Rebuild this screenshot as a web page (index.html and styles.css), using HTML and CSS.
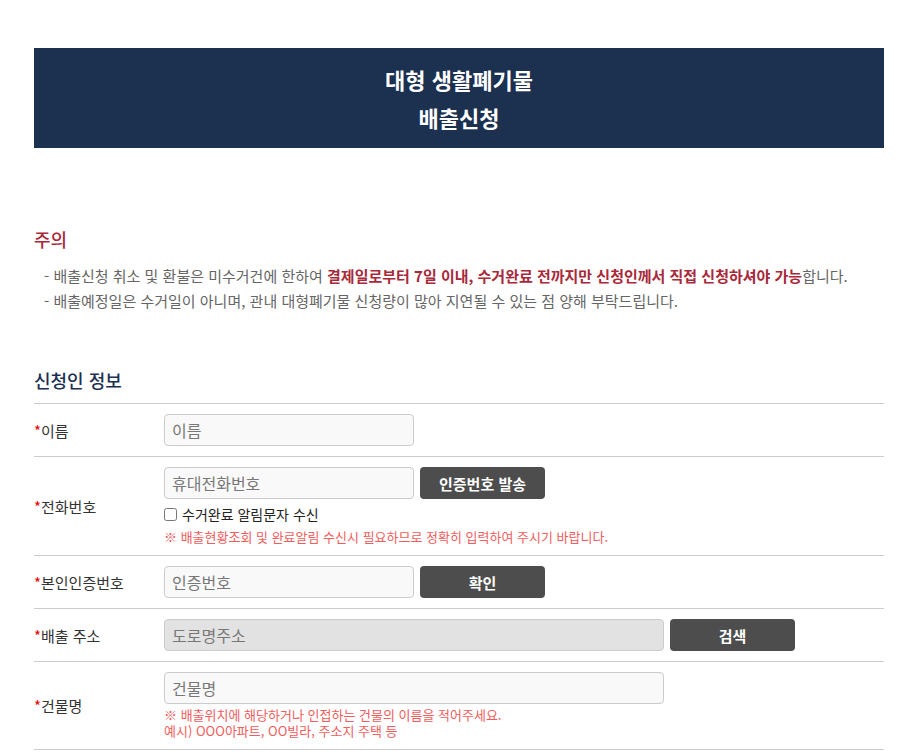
FILE: index.html
```html
<!DOCTYPE html>
<html lang="ko">
<head>
    <meta charset="UTF-8">
    <meta name="viewport" content="width=device-width, initial-scale=1.0">
    <title>대형 생활폐기물 배출신청</title>
    <link rel="stylesheet" href="styles.css">
</head>
<body>
    <div class="container">
        <div class="page-title">
            <h1>대형 생활폐기물<br>배출신청</h1>
        </div>

        <div class="notice">
            <h2>주의</h2>
            <ul>
                <li>- 배출신청 취소 및 환불은 미수거건에 한하여 <strong>결제일로부터 7일 이내, 수거완료 전까지만 신청인께서 직접 신청하셔야 가능</strong>합니다.</li>
                <li>- 배출예정일은 수거일이 아니며, 관내 대형폐기물 신청량이 많아 지연될 수 있는 점 양해 부탁드립니다.</li>
            </ul>
        </div>

        <h3 class="section-title">신청인 정보</h3>
        <table class="form-table">
            <tr>
                <th><span class="req">*</span>이름</th>
                <td><input type="text" class="input short" placeholder="이름"></td>
            </tr>
            <tr>
                <th><span class="req">*</span>전화번호</th>
                <td>
                    <div class="field-row">
                        <input type="text" class="input short" placeholder="휴대전화번호">
                        <button type="button" class="btn">인증번호 발송</button>
                    </div>
                    <label class="check"><input type="checkbox"> 수거완료 알림문자 수신</label>
                    <p class="help">※ 배출현황조회 및 완료알림 수신시 필요하므로 정확히 입력하여 주시기 바랍니다.</p>
                </td>
            </tr>
            <tr>
                <th><span class="req">*</span>본인인증번호</th>
                <td>
                    <div class="field-row">
                        <input type="text" class="input short" placeholder="인증번호">
                        <button type="button" class="btn">확인</button>
                    </div>
                </td>
            </tr>
            <tr>
                <th><span class="req">*</span>배출 주소</th>
                <td>
                    <div class="field-row">
                        <input type="text" class="input long readonly" placeholder="도로명주소" readonly>
                        <button type="button" class="btn">검색</button>
                    </div>
                </td>
            </tr>
            <tr>
                <th><span class="req">*</span>건물명</th>
                <td>
                    <input type="text" class="input long" placeholder="건물명">
                    <p class="help tight">※ 배출위치에 해당하거나 인접하는 건물의 이름을 적어주세요.<br>예시) OOO아파트, OO빌라, 주소지 주택 등</p>
                </td>
            </tr>
        </table>
    </div>
</body>
</html>
```

FILE: styles.css
```css
body {
    font-family: 'Noto Sans CJK KR', 'Noto Sans', sans-serif;
    margin: 0;
    padding: 48px 30px 0 34px;
    background-color: #fff;
    color: #333;
}

.container {
    max-width: 850px;
}

.page-title {
    background-color: #1c3050;
    height: 100px;
    display: flex;
    align-items: center;
    justify-content: center;
}

.page-title h1 {
    margin: 0;
    color: #fff;
    font-size: 22px;
    font-weight: 700;
    line-height: 38px;
    text-align: center;
}

.notice {
    margin-top: 78px;
}

.notice h2 {
    margin: 0 0 11px;
    color: #a8293a;
    font-size: 18px;
    font-weight: 500;
    line-height: 26px;
}

.notice ul {
    list-style: none;
    margin: 0;
    padding: 0 0 0 10px;
}

.notice li {
    font-size: 15px;
    line-height: 25px;
    color: #666;
}

.notice strong {
    color: #a8293a;
    font-weight: 700;
}

.section-title {
    margin: 54px 0 10px;
    color: #1c3050;
    font-size: 18px;
    font-weight: 500;
    line-height: 26px;
}

.form-table {
    width: 100%;
    border-collapse: collapse;
    border-top: 1px solid #ccc;
}

.form-table tr {
    border-bottom: 1px solid #ccc;
}

.form-table th {
    width: 130px;
    text-align: left;
    font-size: 15px;
    font-weight: 400;
    color: #333;
    vertical-align: middle;
    padding: 0;
}

.form-table td {
    padding: 10px 0;
}

.req {
    color: #e00;
}

.field-row {
    display: flex;
    gap: 6px;
}

.input {
    box-sizing: border-box;
    height: 32px;
    padding: 0 7px;
    border: 1px solid #ccc;
    border-radius: 4px;
    background-color: #f9f9f9;
    font-family: inherit;
    font-size: 16px;
    color: #333;
    margin: 0;
}

.input::placeholder {
    color: #777;
}

.input.short {
    width: 250px;
}

.input.long {
    width: 500px;
}

.input.readonly {
    background-color: #e2e2e2;
}

.btn {
    width: 125px;
    height: 32px;
    border: none;
    border-radius: 4px;
    background-color: #4d4d4d;
    color: #fff;
    font-family: inherit;
    font-size: 15px;
    font-weight: 700;
    cursor: pointer;
}

.check {
    display: flex;
    align-items: center;
    gap: 5px;
    margin-top: 4px;
    font-size: 14px;
    color: #222;
    line-height: 22px;
}

.check input {
    margin: 0;
    width: 13px;
    height: 13px;
}

.help {
    margin: 4px 0 0;
    font-size: 13px;
    line-height: 16px;
    color: #f25c5c;
}

.help.tight {
    margin-top: 3px;
}
```
